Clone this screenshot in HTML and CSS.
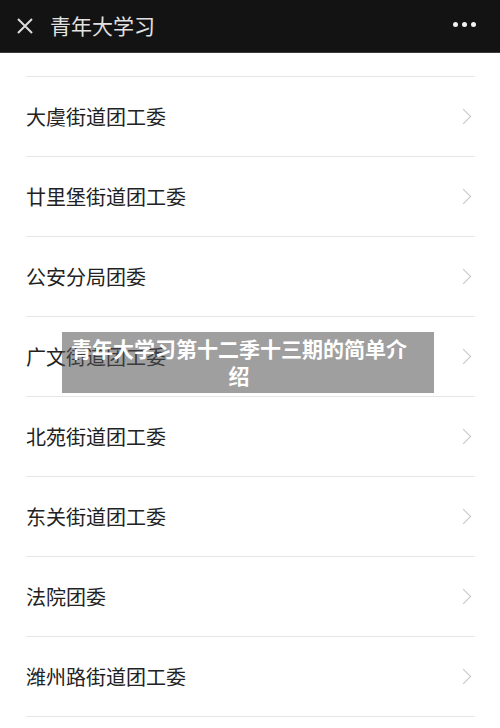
FILE: index.html
```html
<!DOCTYPE html>
<html lang="zh-CN">
<head>
  <meta charset="utf-8">
  <link rel="stylesheet" href="styles.css">
</head>
<body>
  <div class="page">
    <header class="topbar">
      <svg class="close-icon" width="16" height="16" viewBox="0 0 16 16">
        <path d="M1 1 L15 15 M15 1 L1 15" stroke="#dcdcdc" stroke-width="2" fill="none"/>
      </svg>
      <span class="title">青年大学习</span>
      <div class="more">
        <span class="dot"></span>
        <span class="dot"></span>
        <span class="dot"></span>
      </div>
    </header>

    <ul class="org-list">
      <li class="org-spacer"></li>
      <li class="org-item"><span>大虞街道团工委</span><i class="chevron"></i></li>
      <li class="org-item"><span>廿里堡街道团工委</span><i class="chevron"></i></li>
      <li class="org-item"><span>公安分局团委</span><i class="chevron"></i></li>
      <li class="org-item"><span>广文街道团工委</span><i class="chevron"></i></li>
      <li class="org-item"><span>北苑街道团工委</span><i class="chevron"></i></li>
      <li class="org-item"><span>东关街道团工委</span><i class="chevron"></i></li>
      <li class="org-item"><span>法院团委</span><i class="chevron"></i></li>
      <li class="org-item"><span>潍州路街道团工委</span><i class="chevron"></i></li>
    </ul>

    <div class="caption">青年大学习第十二季十三期的简单介绍</div>
  </div>
</body>
</html>
```

FILE: styles.css
```css
* {
  box-sizing: border-box;
}

body {
  margin: 0;
  background: #fff;
  font-family: "Noto Sans CJK SC", "Noto Sans", sans-serif;
}

.page {
  position: relative;
  width: 500px;
  height: 728px;
  overflow: hidden;
}

/* dark title bar */
.topbar {
  height: 53px;
  background: #131313;
  display: flex;
  align-items: center;
  padding-left: 17px;
  border-bottom: 1px solid #3a3a3a;
}

.close-icon {
  flex: none;
}

.title {
  margin-left: 17px;
  color: #e2e2e2;
  font-size: 21px;
  line-height: 1;
  margin-top: -2px;
}

.more {
  margin-left: auto;
  margin-right: 24px;
  display: flex;
  gap: 4px;
  margin-top: -4px;
}

.dot {
  width: 5px;
  height: 5px;
  border-radius: 50%;
  background: #f2f2f2;
}

/* list of organisations */
.org-list {
  list-style: none;
  margin: 0;
  padding: 0;
}

.org-spacer {
  height: 24px;
  margin: 0 25px 0 26px;
  border-bottom: 1px solid #e6e6e6;
}

.org-item {
  height: 80px;
  margin: 0 25px 0 26px;
  border-bottom: 1px solid #e6e6e6;
  display: flex;
  align-items: center;
  justify-content: space-between;
  font-size: 20px;
  color: #222;
}

.org-item span {
  margin-top: -1px;
}

.chevron {
  width: 11px;
  height: 11px;
  border-top: 1.5px solid #c4c4c4;
  border-right: 1.5px solid #c4c4c4;
  transform: rotate(45deg);
  margin-right: 6px;
}

/* grey caption box over the list */
.caption {
  position: absolute;
  left: 62px;
  top: 332px;
  width: 372px;
  height: 61px;
  padding: 3px 26px 0 8px;
  background: rgba(80, 80, 80, 0.55);
  color: #fff;
  font-size: 21px;
  font-weight: bold;
  line-height: 27px;
  text-align: center;
}
```
